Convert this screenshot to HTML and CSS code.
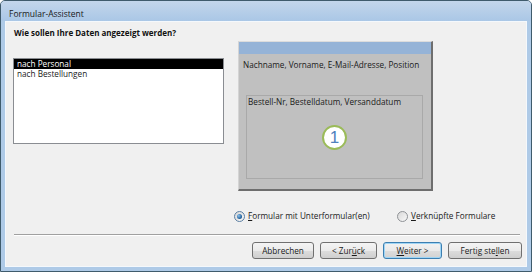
FILE: index.html
```html
<!DOCTYPE html>
<html lang="de">
<head>
<meta charset="utf-8">
<title>Formular-Assistent</title>
<link rel="stylesheet" href="styles.css">
</head>
<body>
<div class="window">
  <div class="titlebar">Formular-Assistent</div>
  <div class="client">
    <div class="heading">Wie sollen Ihre Daten angezeigt werden?</div>
    <div class="main">
      <div class="listbox">
        <div class="item selected">nach Personal</div>
        <div class="item">nach Bestellungen</div>
      </div>
      <div class="preview">
        <div class="band"></div>
        <div class="fields">Nachname, Vorname, E-Mail-Adresse, Position</div>
        <div class="subform">
          <div class="subfields">Bestell-Nr, Bestelldatum, Versanddatum</div>
          <div class="subbody"><span class="callout">1</span></div>
        </div>
      </div>
    </div>
    <div class="radios">
      <label class="opt first"><span class="radio checked"></span><span><u>F</u>ormular mit Unterformular(en)</span></label>
      <label class="opt"><span class="radio"></span><span><u>V</u>erknüpfte Formulare</span></label>
    </div>
    <div class="separator"></div>
    <div class="buttons">
      <button class="btn w-cancel">Abbrechen</button>
      <button class="btn w-back">&lt; Zur<u>ü</u>ck</button>
      <button class="btn w-next focused"><u>W</u>eiter &gt;</button>
      <button class="btn w-finish">Fertig ste<u>l</u>len</button>
    </div>
  </div>
</div>
</body>
</html>
```

FILE: styles.css
```css
* { box-sizing: border-box; }
html, body { margin: 0; padding: 0; }
body {
  width: 532px;
  height: 272px;
  overflow: hidden;
  font-family: "Open Sans", sans-serif;
  font-size: 8.2px;
  color: #141414;
  background: #ffffff;
}
.window {
  width: 532px;
  height: 272px;
  border: 1px solid #3f5b6c;
  border-radius: 5px 5px 0 0;
  background: #aecae7;
  display: flex;
  flex-direction: column;
}
.titlebar {
  height: 20px;
  padding: 7px 0 0 8px;
  line-height: 12px;
  font-size: 8.5px;
  color: #1a1a1a;
  background: linear-gradient(#c3d6eb, #aac7e6);
  border-radius: 4px 4px 0 0;
}
.client {
  flex: 1;
  margin: 0 4px 4px 4px;
  border: 1px solid #f4f8fc;
  background: #f0f0f0;
  padding: 5px 0 0 7px;
  display: flex;
  flex-direction: column;
}
.heading {
  font-weight: bold;
  font-size: 8px;
  line-height: 12px;
  padding-left: 1px;
  color: #111;
}
.main {
  margin-top: 2px;
  height: 150px;
  display: flex;
  gap: 14px;
}
.listbox {
  margin-top: 17px;
  width: 211px;
  height: 86px;
  border: 1px solid #8a8d92;
  background: #ffffff;
}
.item {
  height: 10px;
  line-height: 10px;
  padding-left: 3px;
  color: #1a1a1a;
}
.item.selected {
  background: #000000;
  color: #ffffff;
}
.preview {
  width: 195px;
  height: 150px;
  background: #c0c0c0;
  border-top: 1px solid #dcdcdc;
  border-left: 1px solid #d4d4d4;
  border-right: 2px solid #6e6e6e;
  border-bottom: 2px solid #6e6e6e;
  display: flex;
  flex-direction: column;
}
.band {
  height: 12px;
  background: #95b3d7;
}
.fields {
  margin-top: 5px;
  padding-left: 4px;
  line-height: 12px;
  color: #1a1a1a;
}
.subform {
  margin: 24px 8px 10px 7px;
  flex: 1;
  border: 1px solid #a9a9a9;
  display: flex;
  flex-direction: column;
}
.subfields {
  line-height: 12px;
  padding-left: 1px;
  color: #1a1a1a;
}
.subbody {
  flex: 1;
  display: flex;
  align-items: center;
  justify-content: center;
  padding-bottom: 12px;
}
.callout {
  width: 25px;
  height: 25px;
  border-radius: 50%;
  border: 2px solid #9bbb59;
  background: #ffffff;
  color: #4f81bd;
  font-family: "Liberation Sans", sans-serif;
  font-size: 17px;
  line-height: 21px;
  text-align: center;
}
.radios {
  margin-top: 19px;
  padding-left: 221px;
  height: 12px;
  display: grid;
  grid-template-columns: 163px auto;
  align-items: center;
}
.opt {
  display: flex;
  align-items: center;
  gap: 3px;
  line-height: 12px;
  color: #1a1a1a;
}
.radio {
  width: 11px;
  height: 11px;
  border-radius: 50%;
  border: 1px solid #8f9296;
  background: linear-gradient(135deg, #d8d8d8, #f8f8f8);
  display: flex;
  align-items: center;
  justify-content: center;
}
.radio.checked {
  border-color: #5b7fa3;
}
.radio.checked::after {
  content: "";
  width: 5px;
  height: 5px;
  border-radius: 50%;
  background: radial-gradient(circle at 35% 35%, #8cc1ec, #1b5a96 70%);
}
.separator {
  margin: 12px 6px 0 1px;
  height: 2px;
  border-top: 1px solid #a0a0a0;
  border-bottom: 1px solid #ffffff;
}
.buttons {
  margin-top: 6px;
  padding-right: 4px;
  display: flex;
  justify-content: flex-end;
  gap: 6px;
}
.btn {
  height: 17px;
  padding: 0;
  font-family: "Open Sans", sans-serif;
  font-size: 8.2px;
  line-height: 15px;
  color: #1a1a1a;
  border: 1px solid #707070;
  border-radius: 3px;
  background: linear-gradient(#f4f4f4 0%, #ebebeb 50%, #dddddd 51%, #cfcfcf 100%);
}
.btn.focused {
  border-color: #3c7fb1;
  box-shadow: inset 0 0 0 1px #9fd5f5;
  background: linear-gradient(#f2f2f2 0%, #eaeaea 50%, #dddddd 51%, #d2d2d2 100%);
}
.w-cancel { width: 62px; }
.w-back { width: 57px; }
.w-next { width: 59px; }
.w-finish { width: 74px; }
```
